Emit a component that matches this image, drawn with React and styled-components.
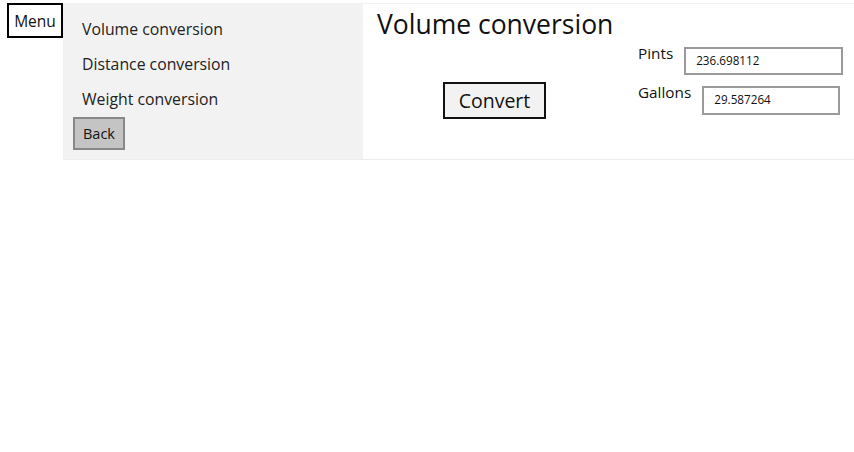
import React from "react";
import styled, { createGlobalStyle } from "styled-components";

const Global = createGlobalStyle`
  html, body { margin: 0; padding: 0; background: #ffffff; }
  body { font-family: "Open Sans", "Noto Sans", sans-serif; color: #1a1a1a; }
  * { box-sizing: border-box; }
`;

const Page = styled.div`
  display: flex;
  align-items: flex-start;
  padding: 3px 0 0 7px;
  width: 854px;
  height: 452px;
  overflow: hidden;
`;

const MenuButton = styled.button`
  width: 56px;
  height: 35px;
  border: 2px solid #000;
  background: #fff;
  font-family: inherit;
  font-size: 15.5px;
  color: #111;
  padding: 1px 0 0;
  margin: 0;
  flex: none;
`;

const Frame = styled.div`
  display: flex;
  flex: none;
  width: 800px;
  height: 157px;
  border-top: 1px solid #f3f3f3;
  border-bottom: 1px solid #ededed;
`;

const Nav = styled.nav`
  width: 300px;
  background: #f2f2f2;
  padding: 8px 0 0 10px;
  display: flex;
  flex-direction: column;
  align-items: flex-start;
`;

const NavItem = styled.div`
  height: 35px;
  line-height: 35px;
  padding-left: 9px;
  font-size: 15.8px;
  color: #222;
  white-space: nowrap;
`;

const BackButton = styled.button`
  width: 52px;
  height: 33px;
  background: #c4c4c4;
  border: 2px solid #888;
  font-family: inherit;
  font-size: 14.5px;
  color: #111;
  text-align: left;
  padding: 0 0 0 8px;
  margin: 0;
`;

const Content = styled.section`
  flex: 1;
  display: flex;
  background: #fff;
`;

const MainCol = styled.div`
  width: 263px;
  display: flex;
  flex-direction: column;
`;

const Title = styled.h1`
  margin: 0;
  padding: 4px 0 0 14px;
  font-size: 26.5px;
  font-weight: 400;
  line-height: 32px;
  color: #111;
  white-space: nowrap;
`;

const ConvertButton = styled.button`
  align-self: center;
  margin-top: 42px;
  width: 103px;
  height: 37px;
  background: #f2f2f2;
  border: 2px solid #111;
  font-family: inherit;
  font-size: 19.5px;
  color: #111;
  padding: 0;
`;

const Fields = styled.div`
  display: flex;
  flex-direction: column;
  gap: 11px;
  padding: 43px 0 0 12px;
`;

const FieldRow = styled.div`
  display: flex;
  align-items: flex-start;
`;

const Label = styled.label`
  font-size: 15.3px;
  line-height: 20px;
  margin-top: -4px;
  margin-right: 11px;
  color: #111;
`;

const Input = styled.div`
  width: ${(p) => p.$w}px;
  height: ${(p) => p.$h}px;
  border: 2px solid #9a9a9a;
  padding-left: 10px;
  font-size: 11.7px;
  line-height: ${(p) => p.$h - 6}px;
  color: #111;
`;

export default function App() {
  return (
    <>
      <Global />
      <Page>
        <MenuButton>Menu</MenuButton>
        <Frame>
          <Nav>
            <NavItem>Volume conversion</NavItem>
            <NavItem>Distance conversion</NavItem>
            <NavItem>Weight conversion</NavItem>
            <BackButton>Back</BackButton>
          </Nav>
          <Content>
            <MainCol>
              <Title>Volume conversion</Title>
              <ConvertButton>Convert</ConvertButton>
            </MainCol>
            <Fields>
              <FieldRow>
                <Label>Pints</Label>
                <Input $w={159} $h={28}>236.698112</Input>
              </FieldRow>
              <FieldRow>
                <Label>Gallons</Label>
                <Input $w={138} $h={29}>29.587264</Input>
              </FieldRow>
            </Fields>
          </Content>
        </Frame>
      </Page>
    </>
  );
}
